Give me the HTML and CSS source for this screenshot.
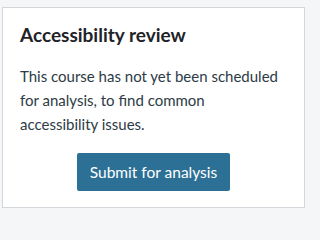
FILE: index.html
```html
<!DOCTYPE html>
<html lang="en">
<head>
<meta charset="utf-8">
<title>Accessibility review</title>
<link rel="stylesheet" href="styles.css">
</head>
<body>
<section class="card">
  <h2 class="card-title">Accessibility review</h2>
  <p class="card-text">This course has not yet been scheduled for analysis, to find common accessibility issues.</p>
  <div class="card-actions">
    <button class="btn-primary" type="button">Submit for analysis</button>
  </div>
</section>
</body>
</html>
```
FILE: styles.css
```css
html, body {
  margin: 0;
  padding: 0;
  background: #f5f6f8;
}
body {
  padding: 7px 1px 0 2px;
  font-family: "Lato", "Liberation Sans", sans-serif;
  color: #2d3b45;
}
.card {
  box-sizing: border-box;
  width: 303px;
  height: 201px;
  background: #fff;
  border: 1px solid #d3d7dc;
  padding: 14px 20px 14px 17px;
  display: flex;
  flex-direction: column;
}
.card-title {
  margin: 0;
  font-size: 19px;
  line-height: 26px;
  font-weight: 700;
  color: #1f2328;
}
.card-text {
  margin: 16px 0 0;
  font-size: 15px;
  line-height: 24px;
}
.card-actions {
  display: flex;
  justify-content: center;
  margin-top: 17px;
  padding-left: 3px;
}
.btn-primary {
  font-family: inherit;
  font-size: 15.5px;
  color: #fff;
  background: #2d7096;
  border: none;
  border-radius: 2px;
  width: 153px;
  height: 38px;
  padding: 0;
}
```
